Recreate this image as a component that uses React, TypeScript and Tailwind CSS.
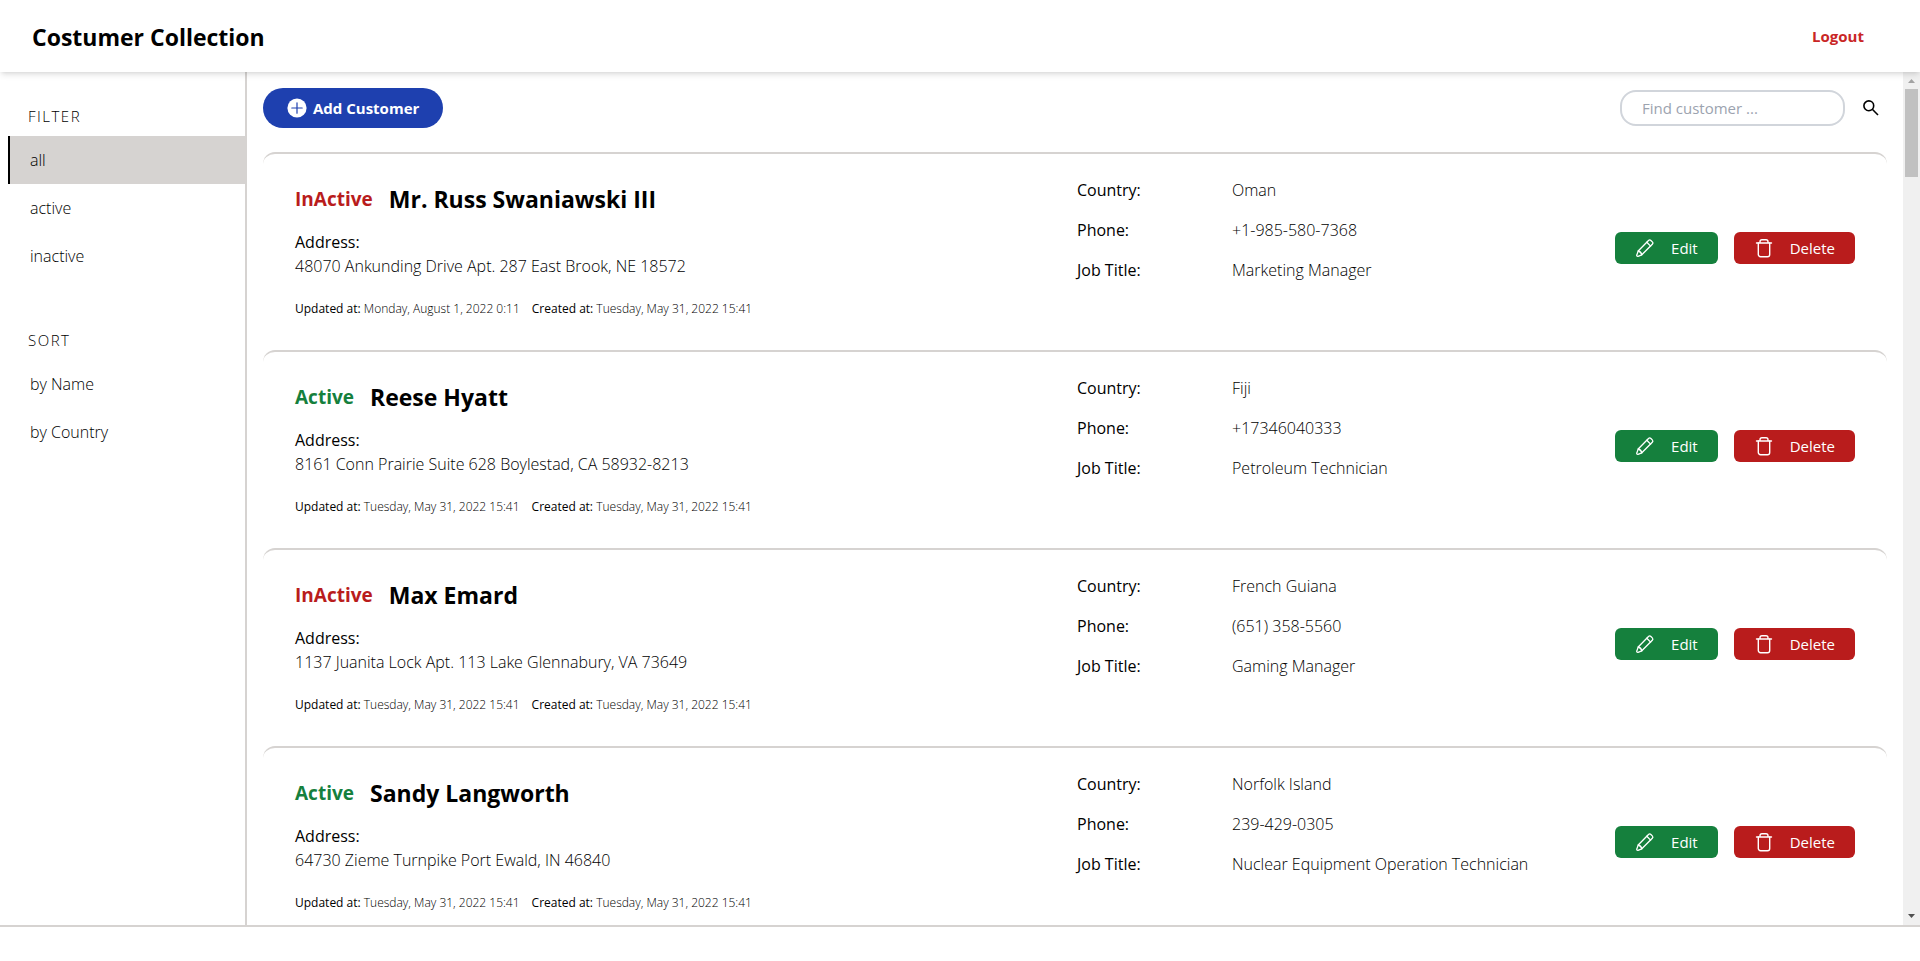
import React from "react";

type Customer = {
  name: string;
  active: boolean;
  address: string;
  updated: string;
  created: string;
  country: string;
  phone: string;
  job: string;
};

const CREATED = "Tuesday, May 31, 2022 15:41";

const customers: Customer[] = [
  { name: "Mr. Russ Swaniawski III", active: false, address: "48070 Ankunding Drive Apt. 287 East Brook, NE 18572", updated: "Monday, August 1, 2022 0:11", created: CREATED, country: "Oman", phone: "+1-985-580-7368", job: "Marketing Manager" },
  { name: "Reese Hyatt", active: true, address: "8161 Conn Prairie Suite 628 Boylestad, CA 58932-8213", updated: CREATED, created: CREATED, country: "Fiji", phone: "+17346040333", job: "Petroleum Technician" },
  { name: "Max Emard", active: false, address: "1137 Juanita Lock Apt. 113 Lake Glennabury, VA 73649", updated: CREATED, created: CREATED, country: "French Guiana", phone: "(651) 358-5560", job: "Gaming Manager" },
  { name: "Sandy Langworth", active: true, address: "64730 Zieme Turnpike Port Ewald, IN 46840", updated: CREATED, created: CREATED, country: "Norfolk Island", phone: "239-429-0305", job: "Nuclear Equipment Operation Technician" },
];

function PlusIcon() {
  return (
    <svg viewBox="0 0 20 20" className="size-5" aria-hidden="true">
      <circle cx="10" cy="10" r="9.6" fill="currentColor" />
      <path d="M10 4.800v10.400M4.800 10h10.400" stroke="#1e40af" strokeWidth="1.2" strokeLinecap="round" />
    </svg>
  );
}

function SearchIcon() {
  return (
    <svg viewBox="0 0 20 20" className="size-5" fill="none" stroke="currentColor" strokeWidth="1.6" aria-hidden="true">
      <circle cx="7.8" cy="7.8" r="4.9" />
      <path d="M11.300 11.300 17 17" />
    </svg>
  );
}

function PencilIcon() {
  return (
    <svg viewBox="0 0 20 20" className="size-5" fill="none" stroke="currentColor" strokeWidth="1.3" strokeLinecap="round" strokeLinejoin="round" aria-hidden="true">
      <path d="M13.500 2.500a1.700 1.700 0 0 1 2.400 0l1.400 1.400a1.700 1.700 0 0 1 0 2.400L6.800 16.800 3 18.300a.9.9 0 0 1-1.200-1.200L3.200 13Z" />
      <path d="M11.800 4.300 15.600 8.100M3.200 13a5 5 0 0 1 3.600 3.800" />
    </svg>
  );
}

function TrashIcon() {
  return (
    <svg viewBox="0 0 20 20" className="size-5" fill="none" stroke="currentColor" strokeWidth="1.4" strokeLinecap="round" strokeLinejoin="round" aria-hidden="true">
      <path d="M2.500 5h15M6 5V3.700a2 2 0 0 1 2-2h4a2 2 0 0 1 2 2V5" />
      <path d="M4.300 5v11.500a2.200 2.200 0 0 0 2.200 2.200h7a2.200 2.200 0 0 0 2.200-2.200V5" />
    </svg>
  );
}

function NavGroup({ title, items, selected }: { title: string; items: string[]; selected?: string }) {
  return (
    <section>
      <h2 className="pl-5 text-[15px] leading-6 font-light tracking-widest">{title}</h2>
      <ul className="mt-2">
        {items.map((item) => (
          <li key={item}>
            <button
              type="button"
              className={
                item === selected
                  ? "h-12 w-full border-l-2 border-black bg-[#d6d3d1] pl-5 text-left font-light"
                  : "h-12 w-full border-l-2 border-transparent pl-5 text-left font-light"
              }
            >
              {item}
            </button>
          </li>
        ))}
      </ul>
    </section>
  );
}

function CustomerCard({ customer }: { customer: Customer }) {
  const details = [
    ["Country:", customer.country],
    ["Phone:", customer.phone],
    ["Job Title:", customer.job],
  ];
  return (
    <article className="mb-2 flex rounded-xl border-t-2 border-[#d6d3d1] px-8 py-4">
      <div className="w-1/2 pt-3 pb-1.5">
        <div className="flex items-center gap-4 leading-[34px] font-bold">
          <span className={customer.active ? "text-[19px] text-[#15803d]" : "text-[19px] text-[#b91c1c]"}>
            {customer.active ? "Active" : "InActive"}
          </span>
          <h3 className="text-[23px]">{customer.name}</h3>
        </div>
        <p className="mt-3.5 leading-6 font-medium">Address:</p>
        <p className="leading-6 font-light">{customer.address}</p>
        <div className="mt-5 flex gap-3 text-[12px] leading-[22px] font-light">
          <p><span className="font-medium">Updated at:</span> {customer.updated}</p>
          <p><span className="font-medium">Created at:</span> {customer.created}</p>
        </div>
      </div>
      <div className="flex w-1/2 items-center justify-between pl-0.5">
        <dl className="self-start">
          {details.map(([label, value]) => (
            <div key={label} className="flex py-2 leading-6">
              <dt className="w-[155px] font-medium">{label}</dt>
              <dd className="font-light">{value}</dd>
            </div>
          ))}
        </dl>
        <div className="flex gap-4 text-[15px] text-white">
          <button type="button" className="flex h-8 items-center gap-4 rounded-md bg-[#15803d] px-5 font-medium"><PencilIcon />Edit</button>
          <button type="button" className="flex h-8 items-center gap-4 rounded-md bg-[#b91c1c] px-5 font-medium"><TrashIcon />Delete</button>
        </div>
      </div>
    </article>
  );
}

function ScrollTrack() {
  return (
    <div className="flex w-[17px] shrink-0 flex-col items-center justify-between bg-[#f0f0f0]" aria-hidden="true">
      <div className="flex w-full flex-col items-center">
        <svg viewBox="0 0 17 17" className="size-[17px]"><path d="M5 11h7L8.500 7Z" fill="#a3a3a3" /></svg>
        <div className="h-22 w-[13px] bg-[#c1c1c1]" />
      </div>
      <svg viewBox="0 0 17 17" className="size-[17px]"><path d="M5 6h7L8.500 10Z" fill="#505050" /></svg>
    </div>
  );
}

export default function App() {
  return (
    <div className="flex h-screen flex-col bg-white font-['Open_Sans','Noto_Sans',sans-serif] text-[16px] text-black">
      <header className="relative z-10 flex h-18 shrink-0 items-center justify-between bg-white px-8 shadow-md">
        <h1 className="pt-0.5 text-[23px] font-bold">Costumer Collection</h1>
        <button type="button" className="mr-6 text-[15px] font-bold text-[#c92626]">Logout</button>
      </header>
      <div className="flex min-h-0 flex-1">
        <aside className="flex w-[247px] shrink-0 flex-col gap-12 border-r-2 border-[#d6d3d1] pt-8 pl-2">
          <NavGroup title="FILTER" items={["all", "active", "inactive"]} selected="all" />
          <NavGroup title="SORT" items={["by Name", "by Country"]} />
        </aside>
        <main className="min-w-0 flex-1 overflow-y-auto p-4 [scrollbar-width:none]">
          <div className="mb-6 flex items-center justify-between text-[15px]">
            <button type="button" className="flex h-10 items-center gap-1.5 rounded-full bg-[#1e40af] px-6 font-bold text-white">
              <PlusIcon />
              Add Customer
            </button>
            <form className="flex items-center" onSubmit={(e) => e.preventDefault()}>
              <input type="text" aria-label="Find customer" placeholder="Find customer ..." className="h-9 w-[225px] rounded-2xl border-2 border-[#d1d5db] px-5 placeholder:text-[#9ca3af]" />
              <button type="submit" aria-label="Search" className="ml-4 mr-1.5"><SearchIcon /></button>
            </form>
          </div>
          {customers.map((customer) => (
            <CustomerCard key={customer.name} customer={customer} />
          ))}
        </main>
        <ScrollTrack />
      </div>
      <footer className="h-9 shrink-0 border-t-2 border-[#d6d3d1]" />
    </div>
  );
}
